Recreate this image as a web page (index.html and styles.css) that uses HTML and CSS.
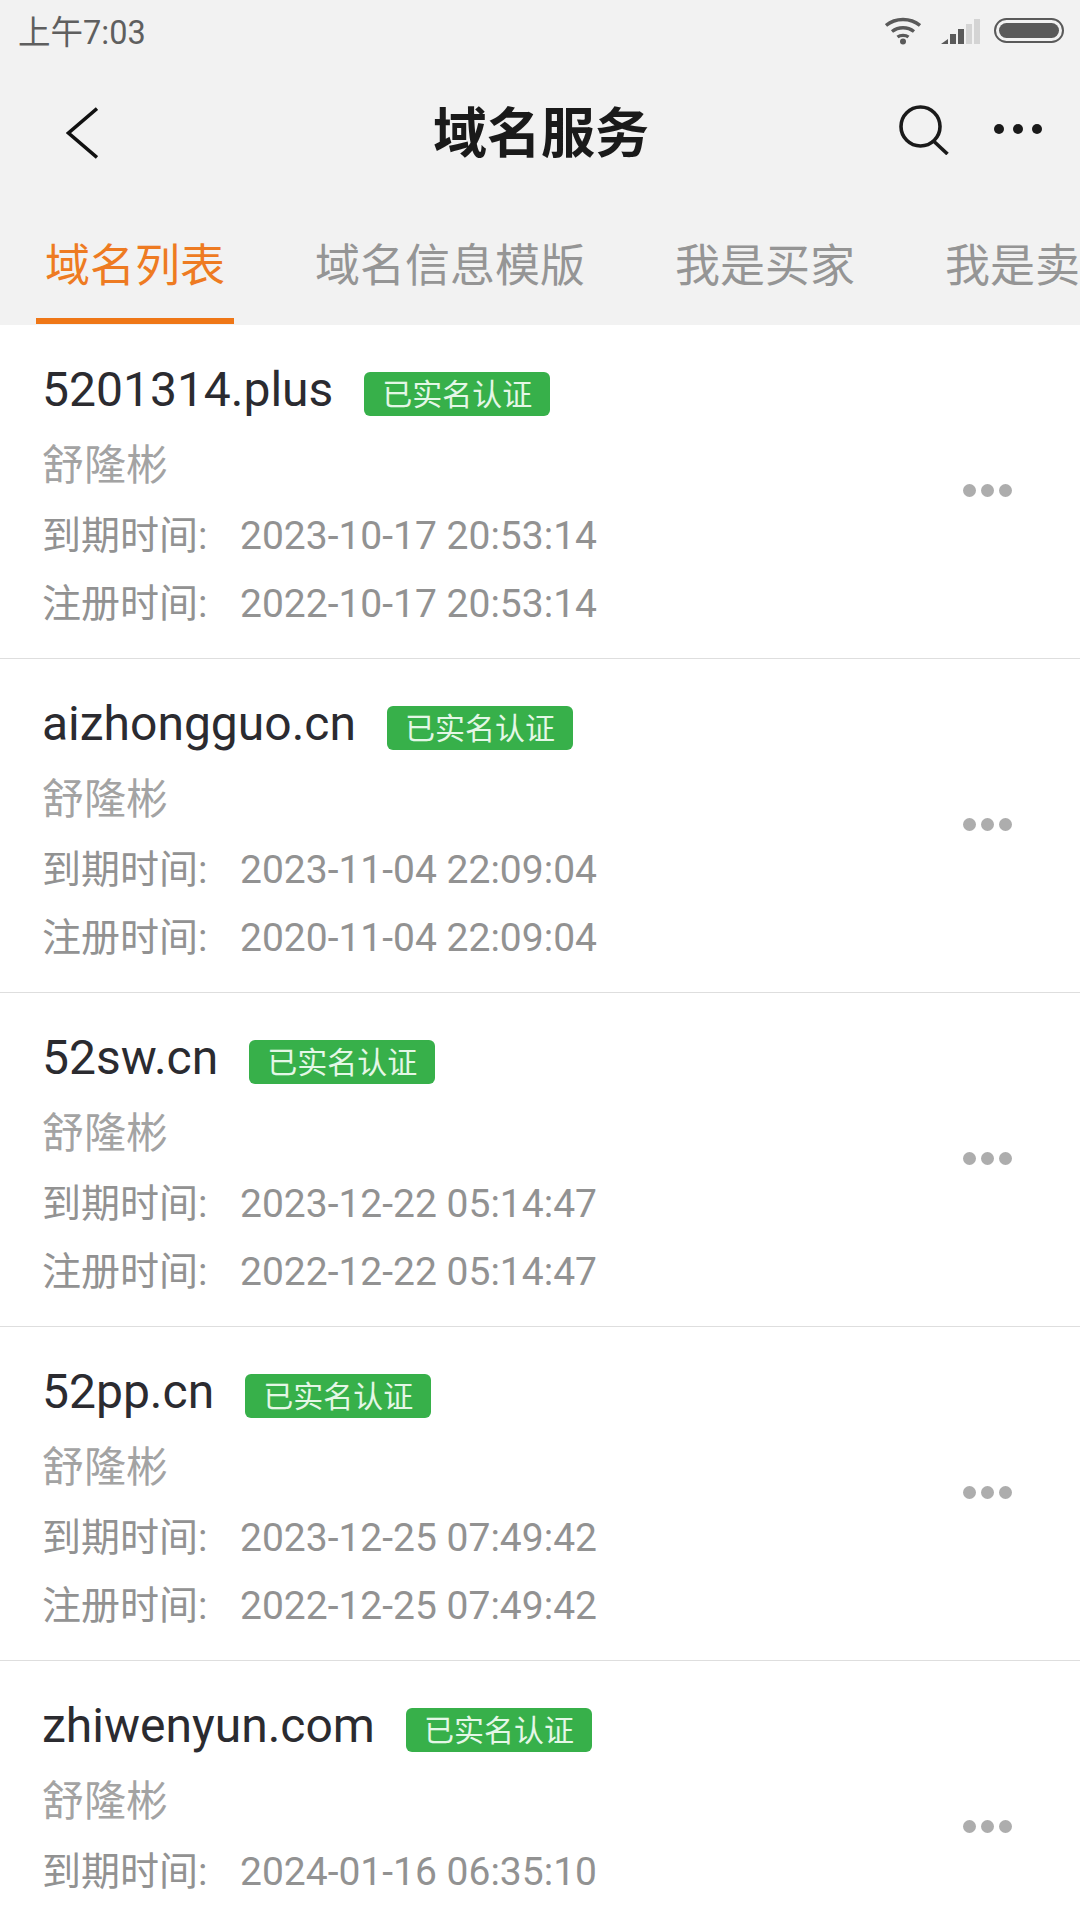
FILE: index.html
```html
<!doctype html>
<html>
<head>
    <meta charset="UTF-8">
    <title>域名服务</title>
    <link rel="stylesheet" href="styles.css">
</head>
<body>
    <header class="top">
        <div class="statusbar">
            <span class="clock">上午7:03</span>
            <div class="status-icons">
                <svg class="wifi" width="36" height="28" viewBox="0 0 36 28" fill="none" stroke="#5a5a5a" stroke-width="3.4">
                    <path d="M1 8.5C10.5 .5 25.5 .5 35 8.5"/>
                    <path d="M7 14.5C13.5 9.5 22.5 9.5 29 14.5"/>
                    <path d="M12.500 20C15.500 17.800 20.500 17.800 23.500 20"/>
                    <circle cx="18" cy="24.500" r="3" fill="#5a5a5a" stroke="none"/>
                </svg>
                <svg class="signal" width="39" height="26" viewBox="0 0 39 26">
                    <path d="M0 25 7 20V25Z" fill="#5a5a5a"/>
                    <rect x="9" y="15" width="6" height="10" fill="#5a5a5a"/>
                    <rect x="17" y="10" width="6" height="15" fill="#5a5a5a"/>
                    <rect x="25" y="5" width="6" height="20" fill="#d4d4d4"/>
                    <rect x="33" y="0" width="6" height="25" fill="#d4d4d4"/>
                </svg>
                <div class="battery"><div class="battery-fill"></div></div>
            </div>
        </div>

        <nav class="navbar">
            <svg class="back" width="32" height="52" viewBox="0 0 32 52" fill="none" stroke="#111" stroke-width="3.600">
                <path d="M31 1.500 2.500 26 31 50.500"/>
            </svg>
            <h1 class="title">域名服务</h1>
            <div class="nav-actions">
                <svg class="search" width="50" height="50" viewBox="0 0 50 50" fill="none" stroke="#1a1a1a" stroke-width="3.600">
                    <circle cx="21.500" cy="21.500" r="19.500"/>
                    <path d="M34.500 36 48.500 49"/>
                </svg>
                <div class="more"><i></i><i></i><i></i></div>
            </div>
        </nav>

        <ul class="tabs">
            <li class="active">域名列表</li>
            <li>域名信息模版</li>
            <li>我是买家</li>
            <li>我是卖家</li>
        </ul>
    </header>

    <main>
        <section class="row">
            <div class="info">
                <div class="name-line"><span class="domain">5201314.plus</span><span class="badge">已实名认证</span></div>
                <div class="owner">舒隆彬</div>
                <div class="meta"><span class="label">到期时间:</span>2023-10-17 20:53:14</div>
                <div class="meta"><span class="label">注册时间:</span>2022-10-17 20:53:14</div>
            </div>
            <div class="row-more"><i></i><i></i><i></i></div>
        </section>
        <section class="row">
            <div class="info">
                <div class="name-line"><span class="domain">aizhongguo.cn</span><span class="badge">已实名认证</span></div>
                <div class="owner">舒隆彬</div>
                <div class="meta"><span class="label">到期时间:</span>2023-11-04 22:09:04</div>
                <div class="meta"><span class="label">注册时间:</span>2020-11-04 22:09:04</div>
            </div>
            <div class="row-more"><i></i><i></i><i></i></div>
        </section>
        <section class="row">
            <div class="info">
                <div class="name-line"><span class="domain">52sw.cn</span><span class="badge">已实名认证</span></div>
                <div class="owner">舒隆彬</div>
                <div class="meta"><span class="label">到期时间:</span>2023-12-22 05:14:47</div>
                <div class="meta"><span class="label">注册时间:</span>2022-12-22 05:14:47</div>
            </div>
            <div class="row-more"><i></i><i></i><i></i></div>
        </section>
        <section class="row">
            <div class="info">
                <div class="name-line"><span class="domain">52pp.cn</span><span class="badge">已实名认证</span></div>
                <div class="owner">舒隆彬</div>
                <div class="meta"><span class="label">到期时间:</span>2023-12-25 07:49:42</div>
                <div class="meta"><span class="label">注册时间:</span>2022-12-25 07:49:42</div>
            </div>
            <div class="row-more"><i></i><i></i><i></i></div>
        </section>
        <section class="row">
            <div class="info">
                <div class="name-line"><span class="domain">zhiwenyun.com</span><span class="badge">已实名认证</span></div>
                <div class="owner">舒隆彬</div>
                <div class="meta"><span class="label">到期时间:</span>2024-01-16 06:35:10</div>
            </div>
            <div class="row-more"><i></i><i></i><i></i></div>
        </section>
    </main>
</body>
</html>
```

FILE: styles.css
```css
html, body {
    margin: 0;
    padding: 0;
    height: 1920px;
    overflow: hidden;
}
body {
    width: 1080px;
    background-color: #fff;
    font-family: Roboto, "Noto Sans CJK SC", sans-serif;
}

/* 顶部灰色区域：状态栏 + 标题栏 + 标签 */
.top {
    height: 325px;
    background-color: #f2f2f2;
    overflow: hidden;
}
.statusbar {
    height: 58px;
    padding: 0 16px 0 18px;
    display: flex;
    justify-content: space-between;
    align-items: center;
}
.clock {
    font-size: 32.500px;
    color: #5f5f5f;
}
.status-icons {
    display: flex;
    align-items: center;
    margin-top: 3px;
}
.wifi {
    margin-right: 20px;
}
.signal {
    margin-top: 2px;
    margin-right: 14px;
}
.battery {
    width: 70px;
    height: 25px;
    box-sizing: border-box;
    padding: 3px;
    border: 2px solid #5a5a5a;
    border-radius: 13px;
}
.battery-fill {
    height: 100%;
    background-color: #5a5a5a;
    border-radius: 8px;
}

/* 左右两列等宽，标题才能居中 */
.navbar {
    height: 143px;
    padding: 0 38px 0 40px;
    display: grid;
    grid-template-columns: 1fr auto 1fr;
    align-items: center;
}
.back {
    margin-left: 26px;
    margin-top: 6px;
}
.title {
    margin: 0;
    font-size: 54px;
    font-weight: bold;
    color: #1a1a1a;
}
.nav-actions {
    display: flex;
    justify-content: flex-end;
    align-items: center;
    gap: 45px;
}
.search {
    margin-top: 1px;
}
.more {
    display: flex;
    gap: 9px;
    margin-top: -2px;
}
.more i {
    width: 10px;
    height: 10px;
    border-radius: 50%;
    background-color: #1a1a1a;
}

.tabs {
    margin: 0;
    padding: 0 0 0 36px;
    height: 124px;
    list-style: none;
    display: flex;
    gap: 72px;
    white-space: nowrap;
}
.tabs li {
    box-sizing: border-box;
    height: 123px;
    padding: 35px 9px 0;
    font-size: 45px;
    line-height: 62px;
    color: #959595;
}
.tabs .active {
    color: #ee7b22;
    border-bottom: 6px solid #ef7717;
}

/* 域名列表 */
.row {
    box-sizing: border-box;
    height: 334px;
    padding: 34px 68px 0 42px;
    border-bottom: 1px solid #dedede;
    display: flex;
    justify-content: space-between;
}
.name-line {
    display: flex;
    align-items: center;
    height: 60px;
    margin-bottom: 13px;
}
.domain {
    font-size: 48px;
    color: #2b2b30;
}
.badge {
    margin-left: 31px;
    margin-top: 10px;
    width: 186px;
    height: 44px;
    border-radius: 6px;
    background-color: #37b04a;
    color: #e4f7e6;
    font-size: 30px;
    line-height: 46px;
    text-align: center;
}
.owner {
    height: 70px;
    font-size: 42px;
    line-height: 68px;
    color: #a3a3a3;
}
.meta {
    height: 68px;
    font-size: 39px;
    line-height: 68px;
    color: #929292;
}
.label {
    display: inline-block;
    width: 198px;
}
.row-more {
    display: flex;
    gap: 5px;
    margin-top: 125px;
}
.row-more i {
    width: 13px;
    height: 13px;
    border-radius: 50%;
    background-color: #adadad;
}
```
